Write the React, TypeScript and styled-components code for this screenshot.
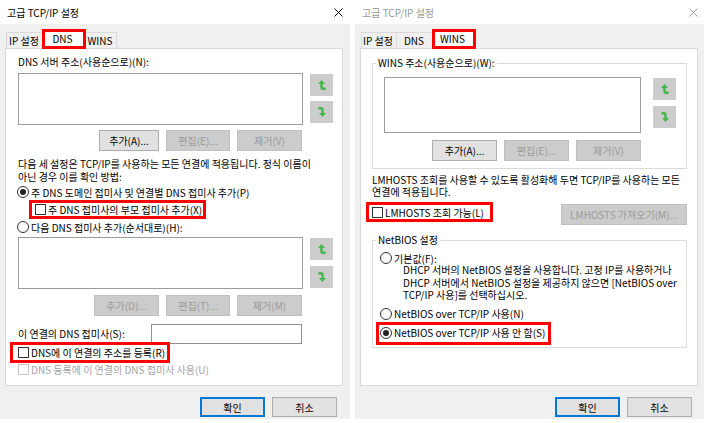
import React from "react";
import styled, { createGlobalStyle, css } from "styled-components";

const GlobalStyle = createGlobalStyle`
  html, body { margin: 0; padding: 0; background: #ffffff; }
  body {
    font-family: "Noto Sans CJK KR", "Noto Sans", sans-serif;
    font-size: 10px;
    color: #000;
  }
  *, *::before, *::after { box-sizing: border-box; }
`;

const Page = styled.div`
  display: flex;
  gap: 5px;
  width: 704px;
  height: 423px;
  overflow: hidden;
`;

const Dialog = styled.div`
  flex: none;
  width: 350px;
  height: 419px;
  background: #f0f0f0;
  display: flex;
  flex-direction: column;
`;

const TitleBar = styled.div<{ $inactive?: boolean }>`
  flex: none;
  height: 24px;
  background: #fff;
  display: flex;
  align-items: center;
  justify-content: space-between;
  padding: 0 7px 0 7px;
  color: ${(p) => (p.$inactive ? "#999999" : "#000")};
`;

const CloseIcon = styled.svg<{ $inactive?: boolean }>`
  width: 9px;
  height: 9px;
  stroke: ${(p) => (p.$inactive ? "#9c9c9c" : "#000")};
  stroke-width: 1;
  fill: none;
`;

const Body = styled.div`
  display: flex;
  flex-direction: column;
  padding: 5px 7px 0 5px;
`;

const TabStrip = styled.div`
  display: flex;
  align-items: flex-end;
  height: 19px;
  position: relative;
  z-index: 2;
`;

const Tab = styled.div<{ $active?: boolean; $w: number }>`
  flex: none;
  width: ${(p) => p.$w}px;
  height: 16px;
  padding: 0 2px 0 0;
  display: flex;
  align-items: center;
  justify-content: center;
  white-space: nowrap;
  border: 1px solid #d9d9d9;
  border-bottom: none;
  background: #f0f0f0;
  margin-left: -1px;
  &:first-child {
    margin-left: 1px;
  }
  ${(p) =>
    p.$active &&
    css`
      height: 20px;
      margin: 0 0 -1px -2px;
      padding: 0 3px 2px 0;
      background: #fff;
      position: relative;
      z-index: 2;
      &::after {
        content: "";
        position: absolute;
        inset: -1px -1px 0 -1px;
        border: 3px solid #ff0000;
      }
    `}
`;

const Panel = styled.div<{ $pad: string }>`
  flex: none;
  height: 338px;
  background: #fff;
  border: 1px solid #d9d9d9;
  display: flex;
  flex-direction: column;
  padding: ${(p) => p.$pad};
  position: relative;
  z-index: 1;
`;

const Footer = styled.div`
  display: flex;
  justify-content: flex-end;
  gap: 7px;
  margin-top: 11px;
  padding-right: 6px;
`;

const Btn = styled.button<{ $w?: number; $h?: number; $default?: boolean }>`
  flex: none;
  width: ${(p) => p.$w ?? 65}px;
  height: ${(p) => p.$h ?? 21}px;
  font: inherit;
  color: #000;
  padding: 0;
  background: #e1e1e1;
  border: 1px solid #adadad;
  white-space: nowrap;
  ${(p) =>
    p.$default &&
    css`
      border-color: #0078d7;
      box-shadow: inset 0 0 0 1px #0078d7;
    `}
  &:disabled {
    background: #cccccc;
    border-color: #bfbfbf;
    color: #9a9a9a;
  }
`;

const Text = styled.div<{ $mt?: number; $lh?: number; $ml?: number; $w?: number }>`
  flex: none;
  white-space: nowrap;
  line-height: ${(p) => p.$lh ?? 14}px;
  margin-top: ${(p) => p.$mt ?? 0}px;
  margin-left: ${(p) => p.$ml ?? 0}px;
  ${(p) => p.$w !== undefined && css`width: ${p.$w}px;`}
`;

const ListRow = styled.div<{ $mt?: number; $gap: number }>`
  display: flex;
  gap: ${(p) => p.$gap}px;
  margin-top: ${(p) => p.$mt ?? 0}px;
  align-items: flex-start;
`;

const ListBox = styled.div<{ $h: number }>`
  flex: 1;
  height: ${(p) => p.$h}px;
  background: #fff;
  border: 1px solid #9c9c9c;
`;

const SideCol = styled.div<{ $gap: number }>`
  flex: none;
  width: 23px;
  display: flex;
  flex-direction: column;
  gap: ${(p) => p.$gap}px;
  margin-top: 1px;
`;

const ArrowBtn = styled.div`
  height: 22px;
  background: #cccccc;
  display: flex;
  align-items: center;
  justify-content: center;
`;

const ArrowSvg = styled.svg<{ $down?: boolean }>`
  width: 8px;
  height: 10px;
  fill: #45b64d;
  ${(p) => p.$down && css`transform: rotate(180deg);`}
`;

const Arrow = ({ down }: { down?: boolean }) => (
  <ArrowSvg $down={down} viewBox="0 0 8 10">
    <path d="M3.5 0 L7 4 H4.7 V6.8 Q4.7 7.5 5.4 7.5 H7.6 V10 H5.1 Q2.3 10 2.3 7.2 V4 H0 Z" />
  </ArrowSvg>
);

const ButtonRow = styled.div<{ $mt: number; $pr: number; $gap?: number }>`
  display: flex;
  justify-content: flex-end;
  gap: ${(p) => p.$gap ?? 7}px;
  margin-top: ${(p) => p.$mt}px;
  padding-right: ${(p) => p.$pr}px;
`;

const OptionRow = styled.div<{
  $mt?: number;
  $h?: number;
  $ml?: number;
  $mark?: string;
  $disabled?: boolean;
}>`
  flex: none;
  align-self: flex-start;
  display: flex;
  align-items: center;
  gap: 2px;
  white-space: nowrap;
  height: ${(p) => p.$h ?? 16}px;
  margin-top: ${(p) => p.$mt ?? 0}px;
  margin-left: ${(p) => p.$ml ?? 0}px;
  color: ${(p) => (p.$disabled ? "#a3a3a3" : "#000")};
  position: relative;
  ${(p) =>
    p.$mark &&
    css`
      &::after {
        content: "";
        position: absolute;
        inset: ${p.$mark};
        border: 3px solid #ff0000;
        pointer-events: none;
      }
    `}
`;

const CheckBox = styled.span<{ $disabled?: boolean }>`
  flex: none;
  width: 11px;
  height: 11px;
  background: #fff;
  border: 1px solid ${(p) => (p.$disabled ? "#c4c4c4" : "#333333")};
`;

const Radio = styled.span<{ $checked?: boolean }>`
  flex: none;
  width: 12px;
  height: 12px;
  border-radius: 50%;
  border: 1px solid #333333;
  background: #fff;
  display: flex;
  align-items: center;
  justify-content: center;
  margin-left: -1px;
  &::after {
    content: "";
    width: 6px;
    height: 6px;
    border-radius: 50%;
    background: #222;
    display: ${(p) => (p.$checked ? "block" : "none")};
  }
`;

const InputRow = styled.div<{ $mt: number }>`
  display: flex;
  align-items: center;
  margin-top: ${(p) => p.$mt}px;
`;

const TextInput = styled.div`
  flex: none;
  width: 151px;
  height: 20px;
  background: #fff;
  border: 1px solid #8f8f8f;
`;

const SplitRow = styled.div<{ $mt: number }>`
  display: flex;
  align-items: center;
  justify-content: space-between;
  margin-top: ${(p) => p.$mt}px;
  height: 21px;
`;

const Group = styled.fieldset<{ $mt?: number; $pad: string }>`
  margin: ${(p) => p.$mt ?? 0}px 0 0 0;
  min-width: 0;
  border: 1px solid #dcdcdc;
  padding: ${(p) => p.$pad};
  display: flex;
  flex-direction: column;
`;

const Legend = styled.legend<{ $ml: number }>`
  padding: 0 2px;
  margin-left: ${(p) => p.$ml}px;
  line-height: 14px;
  white-space: nowrap;
`;

const Close = ({ inactive }: { inactive?: boolean }) => (
  <CloseIcon $inactive={inactive} viewBox="0 0 9 9">
    <path d="M0.5 0.5 L8.5 8.5 M8.5 0.5 L0.5 8.5" />
  </CloseIcon>
);

const DnsDialog = () => (
  <Dialog>
    <TitleBar>
      <span>고급 TCP/IP 설정</span>
      <Close />
    </TitleBar>
    <Body>
      <TabStrip>
        <Tab $w={38}>IP 설정</Tab>
        <Tab $active $w={44}>
          DNS
        </Tab>
        <Tab $w={32}>WINS</Tab>
      </TabStrip>
      <Panel $pad="6px 9px 0 12px">
        <Text>DNS 서버 주소(사용순으로)(N):</Text>
        <ListRow $mt={4} $gap={7}>
          <ListBox $h={52} />
          <SideCol $gap={5}>
            <ArrowBtn>
              <Arrow />
            </ArrowBtn>
            <ArrowBtn>
              <Arrow down />
            </ArrowBtn>
          </SideCol>
        </ListRow>
        <ButtonRow $mt={5} $pr={31}>
          <Btn $w={60}>추가(A)...</Btn>
          <Btn disabled $w={64}>
            편집(E)...
          </Btn>
          <Btn disabled>제거(V)</Btn>
        </ButtonRow>
        <Text $mt={6} $lh={13}>
          다음 세 설정은 TCP/IP를 사용하는 모든 연결에 적용됩니다. 정식 이름이
          <br />
          아닌 경우 이를 확인 방법:
        </Text>
        <OptionRow $mt={1}>
          <Radio $checked />주 DNS 도메인 접미사 및 연결별 DNS 접미사 추가(P)
        </OptionRow>
        <OptionRow $mt={1} $ml={17} $mark="-1px -4px -2px -6px">
          <CheckBox />주 DNS 접미사의 부모 접미사 추가(X)
        </OptionRow>
        <OptionRow $mt={2}>
          <Radio />다음 DNS 접미사 추가(순서대로)(H):
        </OptionRow>
        <ListRow $mt={2} $gap={7}>
          <ListBox $h={52} />
          <SideCol $gap={6}>
            <ArrowBtn>
              <Arrow />
            </ArrowBtn>
            <ArrowBtn>
              <Arrow down />
            </ArrowBtn>
          </SideCol>
        </ListRow>
        <ButtonRow $mt={6} $pr={31}>
          <Btn disabled>추가(D)...</Btn>
          <Btn disabled $w={64}>
            편집(T)...
          </Btn>
          <Btn disabled>제거(M)</Btn>
        </ButtonRow>
        <InputRow $mt={8}>
          <Text $w={133}>이 연결의 DNS 접미사(S):</Text>
          <TextInput />
        </InputRow>
        <OptionRow $mark="-2px -5px -3px -8px">
          <CheckBox />
          DNS에 이 연결의 주소를 등록(R)
        </OptionRow>
        <OptionRow $mt={1} $disabled>
          <CheckBox $disabled />
          DNS 등록에 이 연결의 DNS 접미사 사용(U)
        </OptionRow>
      </Panel>
      <Footer>
        <Btn $default $h={20}>
          확인
        </Btn>
        <Btn $h={20}>취소</Btn>
      </Footer>
    </Body>
  </Dialog>
);

const WinsDialog = () => (
  <Dialog>
    <TitleBar $inactive>
      <span>고급 TCP/IP 설정</span>
      <Close inactive />
    </TitleBar>
    <Body>
      <TabStrip>
        <Tab $w={36}>IP 설정</Tab>
        <Tab $w={38}>DNS</Tab>
        <Tab $active $w={44}>
          WINS
        </Tab>
      </TabStrip>
      <Panel $pad="7px 10px 0 11px">
        <Group $pad="7px 10px 7px 11px">
          <Legend $ml={-8}>WINS 주소(사용순으로)(W):</Legend>
          <ListRow $gap={12}>
            <ListBox $h={56} />
            <SideCol $gap={6}>
              <ArrowBtn>
                <Arrow />
              </ArrowBtn>
              <ArrowBtn>
                <Arrow down />
              </ArrowBtn>
            </SideCol>
          </ListRow>
          <ButtonRow $mt={7} $pr={35}>
            <Btn>추가(A)...</Btn>
            <Btn disabled>편집(E)...</Btn>
            <Btn disabled>제거(V)</Btn>
          </ButtonRow>
        </Group>
        <Text $mt={5} $lh={12}>
          LMHOSTS 조회를 사용할 수 있도록 활성화해 두면 TCP/IP를 사용하는 모든
          <br />
          연결에 적용됩니다.
        </Text>
        <SplitRow $mt={6}>
          <OptionRow $mark="-2px -9px -2px -6px">
            <CheckBox />
            LMHOSTS 조회 가능(L)
          </OptionRow>
          <Btn disabled $w={126}>
            LMHOSTS 가져오기(M)...
          </Btn>
        </SplitRow>
        <Group $mt={8} $pad="5px 10px 6px 8px">
          <Legend $ml={-5}>NetBIOS 설정</Legend>
          <OptionRow $h={12}>
            <Radio />
            기본값(F):
          </OptionRow>
          <Text $ml={22} $lh={12.5}>
            DHCP 서버의 NetBIOS 설정을 사용합니다. 고정 IP를 사용하거나
            <br />
            DHCP 서버에서 NetBIOS 설정을 제공하지 않으면 [NetBIOS over
            <br />
            TCP/IP 사용]를 선택하십시오.
          </Text>
          <OptionRow $mt={4}>
            <Radio />
            NetBIOS over TCP/IP 사용(N)
          </OptionRow>
          <OptionRow $mt={3} $mark="-3px -6px -4px -5px">
            <Radio $checked />
            NetBIOS over TCP/IP 사용 안 함(S)
          </OptionRow>
        </Group>
      </Panel>
      <Footer>
        <Btn $default $h={20}>
          확인
        </Btn>
        <Btn $h={20}>취소</Btn>
      </Footer>
    </Body>
  </Dialog>
);

export default function App() {
  return (
    <>
      <GlobalStyle />
      <Page>
        <DnsDialog />
        <WinsDialog />
      </Page>
    </>
  );
}
